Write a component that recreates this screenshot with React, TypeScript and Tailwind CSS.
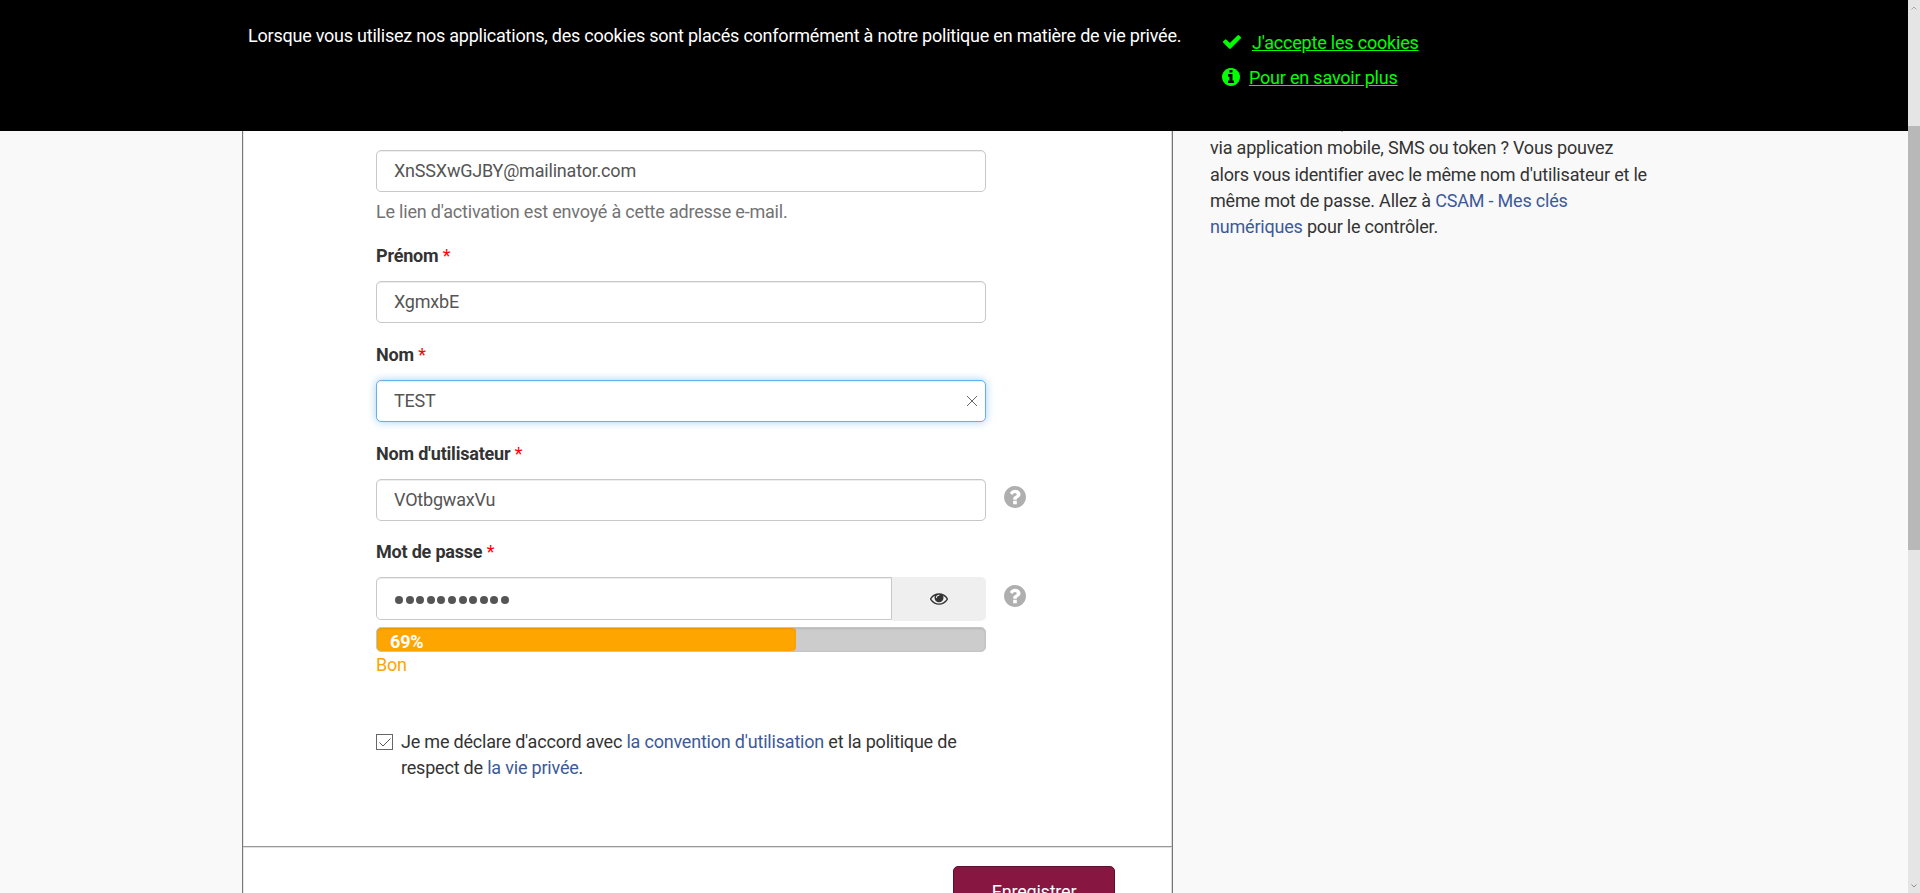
import React from "react";

const CIRCLE = "M1664 896q0 209-103 385.5t-279.5 279.5-385.5 103-385.5-103-279.5-279.5-103-385.5 103-385.5 279.5-279.5 385.5-103 385.5 103 279.5 279.5 103 385.5z";

function CheckIcon() {
  return (
    <svg viewBox="121 334 1550 1188" className="mt-[35px] ml-[1px] h-[14px] w-[18px] shrink-0" fill="currentColor">
      <path d="M1671 566q0 40-28 68l-724 724-136 136q-28 28-68 28t-68-28l-136-136-362-362q-28-28-28-68t28-68l136-136q28-28 68-28t68 28l294 295 656-657q28-28 68-28t68 28l136 136q28 28 28 68z" />
    </svg>
  );
}

function InfoIcon() {
  return (
    <svg viewBox="128 128 1536 1536" className="h-[18px] w-[18px] shrink-0">
      <path d={CIRCLE} fill="currentColor" />
      <path
        fill="#000"
        d="M1152 1376v-160q0-14-9-23t-23-9h-96v-512q0-14-9-23t-23-9h-320q-14 0-23 9t-9 23v160q0 14 9 23t23 9h96v320h-96q-14 0-23 9t-9 23v160q0 14 9 23t23 9h448q14 0 23-9t9-23zM1024 480v-160q0-14-9-23t-23-9h-192q-14 0-23 9t-9 23v160q0 14 9 23t23 9h192q14 0 23-9t9-23z"
      />
    </svg>
  );
}

function HelpIcon() {
  return (
    <svg viewBox="128 128 1536 1536" className="mt-[7px] ml-[18px] h-[22px] w-[22px] shrink-0 text-[#afafaf]">
      <path d={CIRCLE} fill="currentColor" />
      <path
        fill="#fff"
        d="M1024 1376v-192q0-14-9-23t-23-9h-192q-14 0-23 9t-9 23v192q0 14 9 23t23 9h192q14 0 23-9t9-23zm256-672q0-88-55.5-163t-138.5-116-170-41q-243 0-371 213-15 24 8 42l132 100q7 6 19 6 16 0 25-12 53-68 86-92 34-24 86-24 48 0 85.5 26t37.5 59q0 38-20 61t-68 45q-63 28-115.5 86.5t-52.5 125.5v36q0 14 9 23t23 9h192q14 0 23-9t9-23q0-19 21.5-49.5t54.5-49.5q32-18 49-28.5t46-35 44.5-48 28-60.5 12.5-81z"
      />
    </svg>
  );
}

function EyeIcon() {
  return (
    <svg viewBox="0 384 1792 1152" className="mr-[1px] h-[12px] w-[18px]" fill="#333">
      <path d="M1664 960q-152-236-381-353 61 104 61 225 0 185-131.5 316.5t-316.5 131.5-316.5-131.5-131.5-316.5q0-121 61-225-229 117-381 353 133 205 333.5 326.5t434.5 121.5 434.5-121.5 333.5-326.5zm-720-384q0-20-14-34t-34-14q-125 0-214.5 89.5t-89.5 214.5q0 20 14 34t34 14 34-14 14-34q0-86 61-147t147-61q20 0 34-14t14-34zm848 384q0 34-20 69-140 230-376.5 368.5t-499.5 138.5-499.5-139-376.5-368q-20-35-20-69t20-69q140-229 376.5-368t499.5-139 499.5 139 376.5 368q20 35 20 69z" />
    </svg>
  );
}

function Label({ children }: { children: React.ReactNode }) {
  return (
    <div className="h-[26px] font-bold whitespace-nowrap">
      {children} <span className="font-normal text-[#f00]">*</span>
    </div>
  );
}

function Field({ value, focused, children }: { value: string; focused?: boolean; children?: React.ReactNode }) {
  return (
    <div
      className={
        "flex h-[42px] w-[610px] shrink-0 items-center justify-between rounded-[5px] border bg-white pr-[8px] pl-[17px] text-[#555] " +
        (focused
          ? "border-[#66afe9] shadow-[inset_0_1px_1px_rgba(0,0,0,0.075),0_0_8px_rgba(102,175,233,0.6)]"
          : "border-[#c8c8c8] shadow-[inset_0_1px_1px_rgba(0,0,0,0.075)]")
      }
    >
      <span>{value}</span>
      {children}
    </div>
  );
}

function CookieBanner() {
  return (
    <div className="flex h-[131px] w-[1908px] shrink-0 bg-black pl-[248px] whitespace-nowrap">
      <p className="mt-[23px] w-[974px] shrink-0 tracking-[-0.228px] text-white">
        Lorsque vous utilisez nos applications, des cookies sont placés conformément à notre politique en matière de vie privée.
      </p>
      <div className="flex flex-col text-[#0f0]">
        <div className="flex h-[68px]">
          <CheckIcon />
          <a className="mt-[30px] ml-[11px] underline">J'accepte les cookies</a>
        </div>
        <div className="flex">
          <InfoIcon />
          <a className="-mt-[3px] ml-[9px] underline">Pour en savoir plus</a>
        </div>
      </div>
    </div>
  );
}

function Scrollbar() {
  return (
    <div className="flex h-[893px] w-[12px] shrink-0 flex-col items-center bg-[#e5e5e5]">
      <svg viewBox="0 0 6 4" className="mt-[6px] h-[4px] w-[6px]" fill="none" stroke="#a8a8a8">
        <path d="M.5 3.5 3 1l2.500 2.500" />
      </svg>
      <div className="mt-[116px] h-[424px] w-full bg-[#b8b8b8]" />
      <svg viewBox="0 0 6 4" className="mt-[334px] h-[4px] w-[6px]" fill="none" stroke="#8a8f8f">
        <path d="M.5.5 3 3 5.500.5" />
      </svg>
    </div>
  );
}

export default function App() {
  return (
    <div className="flex h-[893px] w-[1920px] overflow-hidden bg-[#f9f9f9] font-['Roboto',sans-serif] text-[18px] leading-[26px] tracking-[-0.2px] text-[#333]">
      <div className="flex h-[893px] w-[1908px] shrink-0 flex-col overflow-hidden">
        <CookieBanner />
        <div className="flex h-[762px] overflow-hidden pl-[242px]">
          <main className="flex h-[762px] w-[931px] shrink-0 flex-col border-x border-[#777] bg-white shadow-[inset_-1px_0_0_#d8d8d8,inset_1px_0_0_#e8e8e8]">
            <div className="flex h-[716px] shrink-0 flex-col border-b border-[#999] pt-[19px] pl-[133px]">
              <Field value="XnSSXwGJBY@mailinator.com" />
              <p className="mt-[7px] text-[#737373]">Le lien d'activation est envoyé à cette adresse e-mail.</p>
              <div className="mt-[18px] h-[38px]"><Label>Prénom</Label></div>
              <Field value="XgmxbE" />
              <div className="mt-[19px] h-[38px]"><Label>Nom</Label></div>
              <Field value="TEST" focused>
                <svg viewBox="0 0 10 10" className="h-[10px] w-[10px]" stroke="#666" fill="none">
                  <path d="M0 0 10 10M10 0 0 10" />
                </svg>
              </Field>
              <div className="mt-[19px] h-[38px]"><Label>Nom d'utilisateur</Label></div>
              <div className="flex">
                <Field value="VOtbgwaxVu" />
                <HelpIcon />
              </div>
              <div className="mt-[18px] h-[38px]"><Label>Mot de passe</Label></div>
              <div className="flex">
                <div className="flex h-[43px] w-[516px] items-center gap-[2.6px] rounded-l-[5px] border border-[#c8c8c8] pl-[18px] shadow-[inset_0_1px_1px_rgba(0,0,0,0.075)]">
                  {Array.from({ length: 11 }, (_, i) => (
                    <span key={i} className="mt-[3px] h-[8px] w-[8px] rounded-full bg-[#555]" />
                  ))}
                </div>
                <div className="flex h-[44px] w-[94px] items-center justify-center rounded-r-[5px] bg-[#efefef]"><EyeIcon /></div>
                <div className="mt-[1px]"><HelpIcon /></div>
              </div>
              <div className="mt-[6px] h-[25px] w-[610px] overflow-hidden rounded-[5px] border border-[#c4c4c4] bg-[#ccc] shadow-[inset_0_1px_2px_rgba(0,0,0,0.1)]">
                <div className="h-[23px] w-[419px] rounded-[4px] bg-[#ffa500] pl-[13px] leading-[28px] font-bold text-white shadow-[inset_0_1px_2px_rgba(0,0,0,0.1)]">69%</div>
              </div>
              <div className="text-[#ffa500]">Bon</div>
              <div className="mt-[51px] flex">
                <div className="mt-[5px] mr-[8px] flex h-[16px] w-[17px] items-center justify-center border border-[#666]">
                  <svg viewBox="0 0 12 9" className="h-[9px] w-[12px]" fill="none" stroke="#555">
                    <path d="M.5 4.500 4 8 11.500.5" />
                  </svg>
                </div>
                <p className="whitespace-nowrap">
                  Je me déclare d'accord avec <a className="text-[#3d5a98]">la convention d'utilisation</a> et la politique de
                  <br />
                  respect de <a className="text-[#3d5a98]">la vie privée</a>.
                </p>
              </div>
            </div>
            <div className="flex h-[46px] flex-col overflow-hidden border-t border-[#e0e0e0] pt-[18px] pl-[710px]">
              <button className="h-[52px] w-[162px] shrink-0 rounded-[5px] border border-[#5f0f30] bg-[#871641] text-white">Enregistrer</button>
            </div>
          </main>
          <aside className="-mt-[21.600px] ml-[37px] w-[460px] whitespace-nowrap">
            <div className="h-[26px] pl-[131px] leading-[28px]">,</div>
            <p className="leading-[26.200px]">
              via application mobile, SMS ou token ? Vous pouvez
              <br />
              alors vous identifier avec le même nom d'utilisateur et le
              <br />
              même mot de passe. Allez à <a className="text-[#3d5a98]">CSAM - Mes clés</a>
              <br />
              <a className="text-[#3d5a98]">numériques</a> pour le contrôler.
            </p>
          </aside>
        </div>
      </div>
      <Scrollbar />
    </div>
  );
}
